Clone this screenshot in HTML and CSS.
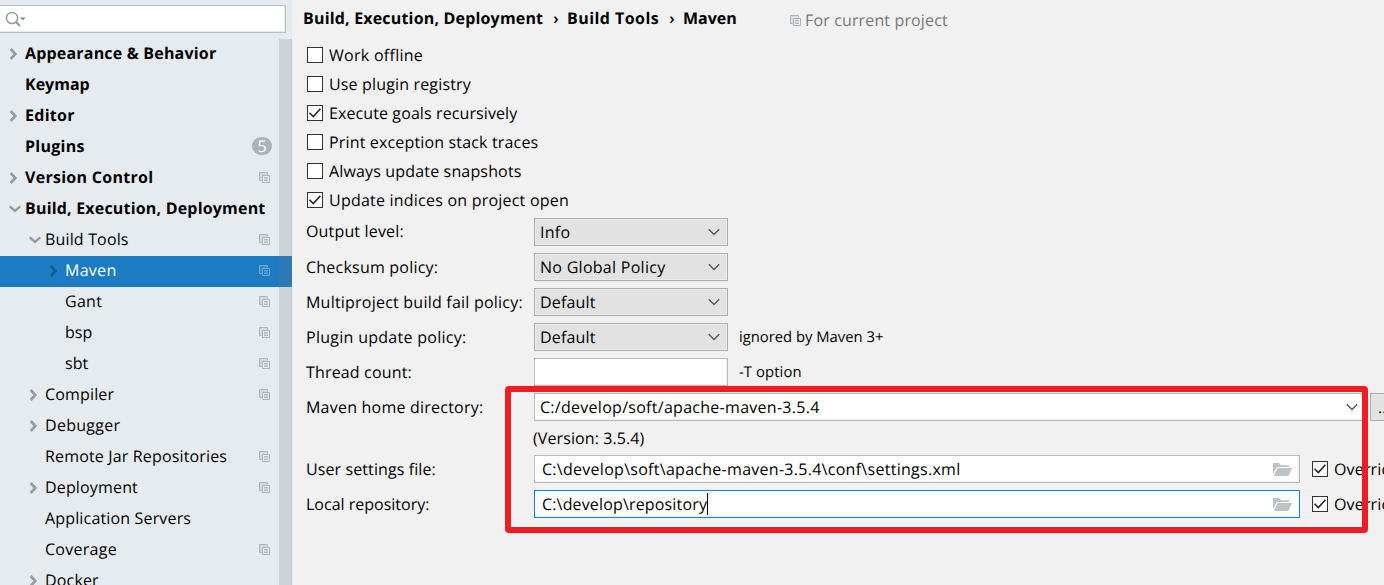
FILE: index.html
```html
<!DOCTYPE html>
<html lang="en">
<head>
<meta charset="utf-8">
<title>Settings</title>
<link rel="stylesheet" href="styles.css">
</head>
<body>
<svg class="defs" aria-hidden="true">
  <symbol id="right" viewBox="0 0 12 12"><path d="M2.7 1 7.3 6 2.7 11" fill="none" stroke="currentColor" stroke-width="2.7"/></symbol>
  <symbol id="down" viewBox="0 0 12 12"><path d="M.8 3.4 6 8 11.2 3.4" fill="none" stroke="currentColor" stroke-width="2.4"/></symbol>
  <symbol id="project" viewBox="0 0 11 11"><path d="M1 1h7v2H3v5H1z" fill="currentColor" opacity=".3"/><path d="M2.5 8.5h-2v-8h8v2" fill="none" stroke="currentColor"/><path d="M3.5 3.5h7v7h-7z" fill="none" stroke="currentColor"/><path d="M5 5.5h4M5 7h4M5 8.5h4" stroke="currentColor" stroke-width=".9"/></symbol>
  <symbol id="arrow" viewBox="0 0 12 8"><path d="M.8 1.3 6 6.5 11.2 1.3" fill="none" stroke="currentColor" stroke-width="1.3"/></symbol>
  <symbol id="tick" viewBox="0 0 16 16"><path d="M2.5 7.8 6.3 11.6 13.4 3.8" fill="none" stroke="#222" stroke-width="1.5"/></symbol>
  <symbol id="folder" viewBox="0 0 19 14"><path d="M0 12V1h6l2 2.2h8V5H4z"/><path d="M4.7 6H19l-3.6 8H.8z"/></symbol>
</svg>
<div class="window">
  <aside class="sidebar">
    <div class="search">
      <svg width="22" height="17" viewBox="0 0 22 17"><circle cx="7" cy="7" r="5.6" fill="none" stroke="#919aa1" stroke-width="1.5"/><path d="m11 11 4 4" stroke="#919aa1" stroke-width="2"/><path d="M15 6.5h5.6L17.8 9.5z" fill="#7f8b93"/></svg>
    </div>
    <nav class="tree">
      <div class="item top"><svg class="tw"><use href="#right"/></svg><span class="t">Appearance &amp; Behavior</span></div>
      <div class="item top"><span class="tw"></span><span class="t flat">Keymap</span></div>
      <div class="item top"><svg class="tw"><use href="#right"/></svg><span class="t wide">Editor</span></div>
      <div class="item top"><span class="tw"></span><span class="t wide">Plugins</span><span class="badge">5</span></div>
      <div class="item top"><svg class="tw"><use href="#right"/></svg><span class="t wide">Version Control</span><svg class="pj"><use href="#project"/></svg></div>
      <div class="item top"><svg class="tw open"><use href="#down"/></svg><span class="t">Build, Execution, Deployment</span></div>
      <div class="item l1"><svg class="tw open"><use href="#down"/></svg><span class="t">Build Tools</span><svg class="pj"><use href="#project"/></svg></div>
      <div class="item l2 selected"><svg class="tw"><use href="#right"/></svg><span class="t wide">Maven</span><svg class="pj"><use href="#project"/></svg></div>
      <div class="item l2"><span class="tw"></span><span class="t wide">Gant</span><svg class="pj"><use href="#project"/></svg></div>
      <div class="item l2"><span class="tw"></span><span class="t flat">bsp</span><svg class="pj"><use href="#project"/></svg></div>
      <div class="item l2"><span class="tw"></span><span class="t flat">sbt</span><svg class="pj"><use href="#project"/></svg></div>
      <div class="item l1"><svg class="tw"><use href="#right"/></svg><span class="t">Compiler</span><svg class="pj"><use href="#project"/></svg></div>
      <div class="item l1"><svg class="tw"><use href="#right"/></svg><span class="t wide">Debugger</span></div>
      <div class="item l1"><span class="tw"></span><span class="t">Remote Jar Repositories</span><svg class="pj"><use href="#project"/></svg></div>
      <div class="item l1"><svg class="tw"><use href="#right"/></svg><span class="t">Deployment</span><svg class="pj"><use href="#project"/></svg></div>
      <div class="item l1"><span class="tw"></span><span class="t">Application Servers</span></div>
      <div class="item l1"><span class="tw"></span><span class="t wide">Coverage</span><svg class="pj"><use href="#project"/></svg></div>
      <div class="item l1"><svg class="tw"><use href="#right"/></svg><span class="t">Docker</span></div>
    </nav>
    <div class="scrollbar"></div>
  </aside>
  <main class="content">
    <header class="crumbs">
      <span class="c1">Build, Execution, Deployment</span><span class="sep">›</span><span class="c2">Build Tools</span><span class="sep">›</span><span class="c3">Maven</span>
      <span class="scope"><svg class="pj"><use href="#project"/></svg>For current project</span>
    </header>
    <section class="checks">
      <label class="check"><span class="box"></span><span class="wide">Work offline</span></label>
      <label class="check"><span class="box"></span>Use plugin registry</label>
      <label class="check"><span class="box"><svg><use href="#tick"/></svg></span><span class="snug">Execute goals recursively</span></label>
      <label class="check"><span class="box"></span>Print exception stack traces</label>
      <label class="check"><span class="box"></span>Always update snapshots</label>
      <label class="check"><span class="box"><svg><use href="#tick"/></svg></span><span class="loose">Update indices on project open</span></label>
    </section>
    <section class="form">
      <div class="row first"><span class="label">Output level:</span><div class="combo"><span class="wide">Info</span><svg class="arrow"><use href="#arrow"/></svg></div></div>
      <div class="row"><span class="label loose">Checksum policy:</span><div class="combo"><span class="wide">No Global Policy</span><svg class="arrow"><use href="#arrow"/></svg></div></div>
      <div class="row"><span class="label loose">Multiproject build fail policy:</span><div class="combo"><span>Default</span><svg class="arrow"><use href="#arrow"/></svg></div></div>
      <div class="row"><span class="label wide">Plugin update policy:</span><div class="combo"><span>Default</span><svg class="arrow"><use href="#arrow"/></svg></div><span class="hint">ignored by Maven 3+</span></div>
      <div class="row"><span class="label">Thread count:</span><div class="field short"></div><span class="hint loose">-T option</span></div>
      <div class="row"><span class="label loose">Maven home directory:</span><div class="field home"><span class="wide">C:/develop/soft/apache-maven-3.5.4</span><svg class="arrow"><use href="#arrow"/></svg></div><div class="more">...</div></div>
      <div class="version">(Version: 3.5.4)</div>
      <div class="row"><span class="label snug">User settings file:</span><div class="field path"><span class="wide">C:\develop\soft\apache-maven-3.5.4\conf\settings.xml</span><svg class="folder"><use href="#folder"/></svg></div><label class="check override"><span class="box"><svg><use href="#tick"/></svg></span>Override</label></div>
      <div class="row"><span class="label flat">Local repository:</span><div class="field path focus"><span>C:\develop\repository</span><i class="caret"></i><svg class="folder"><use href="#folder"/></svg></div><label class="check override"><span class="box"><svg><use href="#tick"/></svg></span>Override</label></div>
    </section>
  </main>
  <div class="highlight"></div>
</div>
</body>
</html>
```
FILE: styles.css
```css
* { box-sizing: border-box; }
body {
  margin: 0;
  font: 16px/20px "Open Sans", "Noto Sans", sans-serif;
  letter-spacing: .16px;
  color: #000;
  background: #f1f1f1;
  text-rendering: geometricPrecision;
}
svg { display: block; flex: none; }
.defs { position: absolute; width: 0; height: 0; }
.window { position: relative; display: flex; width: 1384px; height: 585px; overflow: hidden; white-space: nowrap; }
.wide { letter-spacing: .28px; }
.loose { letter-spacing: .22px; }
.snug { letter-spacing: .1px; }
.flat { letter-spacing: 0; }

.sidebar { position: relative; flex: none; width: 292px; height: 585px; padding-top: 5px; background: #e6ebef; overflow: hidden; }
.search { width: 286px; height: 28px; padding: 5px 0 0 5px; background: #fff; border: 1px solid #b9bdc0; border-left: 0; box-shadow: inset -1px -1px #e8eaec; }
.tree { padding-top: 5px; }
.item { display: flex; align-items: center; height: 31px; padding: 0 22px 3px 8px; }
.item:first-child { margin-top: 1px; }
.top { font-weight: 700; letter-spacing: .19px; }
.l1 { padding-left: 28px; }
.l2 { padding-left: 48px; }
.tw { flex: none; width: 12px; height: 12px; margin: 1px 5px 0 0; color: #989ca0; }
.open { position: relative; left: 1px; }
.pj { width: 11px; height: 11px; margin: 0 0 0 auto; color: #a9b4bb; }
.badge { width: 20px; height: 18px; margin: 0 -2px 0 auto; border-radius: 9px; background: #a9b4bb; color: #fff; font-weight: 400; line-height: 18px; text-align: center; letter-spacing: 0; }
.selected { background: #1b7cc3; color: #fff; }
.selected .tw { color: #155a8b; }
.selected .pj { color: #72a9d0; }
.scrollbar { position: absolute; top: 39px; right: 0; bottom: 0; width: 13px; background: rgba(115, 115, 122, .2); border-right: 1px solid rgba(115, 115, 122, .12); }

.content { flex: 1; min-width: 0; }
.crumbs { display: flex; height: 40px; padding: 8px 0 0 11px; font-weight: 700; letter-spacing: .18px; }
.c1 { width: 241px; }
.c2 { width: 92px; letter-spacing: .45px; }
.c3 { width: 107px; letter-spacing: 0; }
.sep { width: 23px; padding-left: 1px; text-align: center; font-weight: 600; }
.c2 + .sep { width: 24px; padding-left: 2px; }
.scope { display: flex; gap: 4px; padding-top: 2px; font-weight: 400; letter-spacing: .14px; color: #787878; }
.scope .pj { margin-top: 5px; }

.checks { padding-left: 15px; }
.check { display: flex; align-items: center; height: 29px; }
.box { width: 16px; height: 16px; margin: 1px 6px 0 0; background: #fff; border: 1px solid #333; }
.box svg { width: 16px; height: 16px; margin: -1px; }

.form { padding: 4px 0 0 14px; }
.row { display: flex; height: 35px; }
.label { flex: none; width: 228px; padding-top: 4px; }
.first .label { padding-top: 3px; }
.combo, .field { display: flex; flex: none; align-items: center; height: 28px; padding: 0 6px 0 5px; border: 1px solid #adadad; }
.combo { width: 194px; padding-right: 7px; background: #e2e2e2; box-shadow: inset 0 0 0 1px #ebebeb; }
.field { background: #fff; border-color: #b9b9b9; box-shadow: inset -1px -1px #eee; }
.arrow { width: 12px; height: 8px; margin-left: auto; color: #555; }
.short { width: 194px; }
.home { width: 833px; }
.home .arrow { margin-right: 2px; }
.hint { padding: 4px 0 0 11px; font-size: 14.8px; letter-spacing: 0; }
.hint.loose { letter-spacing: .1px; }
.more { flex: none; width: 24px; height: 28px; margin-left: 3px; padding: 3px 7px; background: #e2e2e2; border: 1px solid #adadad; }
.version { height: 27px; padding: 0 0 0 227px; line-height: 21px; letter-spacing: .1px; }
.path { width: 766px; padding: 0 7px; }
.focus { border-color: #1883d7; }
.caret { width: 1px; height: 22px; background: #000; }
.folder { width: 19px; height: 14px; margin-left: auto; fill: #bcc2c6; }
.override { height: 28px; margin-left: 12px; }
.override .box { margin-top: 0; }
.highlight { position: absolute; left: 505px; top: 386px; width: 863px; height: 147px; border: 6px solid #ee1c25; border-radius: 4px; }
```
